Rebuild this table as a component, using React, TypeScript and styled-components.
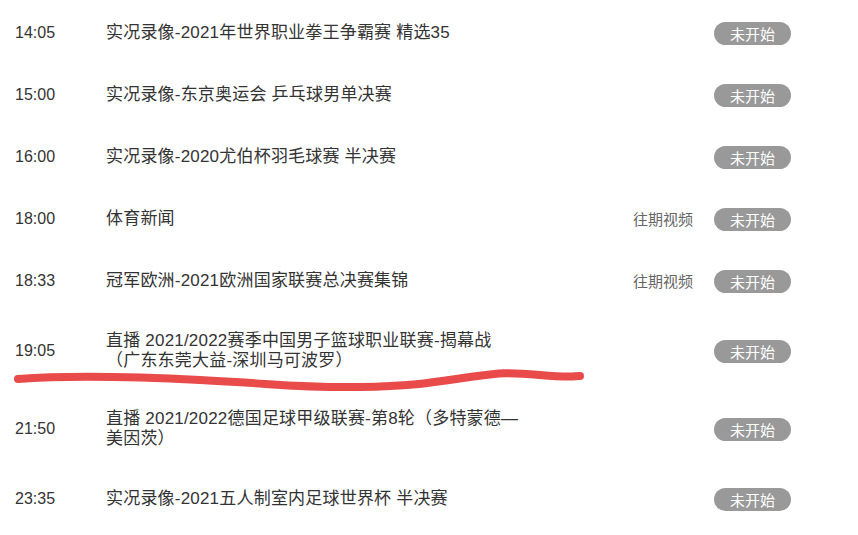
import React from "react";
import styled, { createGlobalStyle } from "styled-components";

const GlobalStyle = createGlobalStyle`
  html, body {
    margin: 0;
    padding: 0;
    background: #ffffff;
  }
  body {
    font-family: "Liberation Sans", "Noto Sans CJK SC", sans-serif;
  }
`;

const Page = styled.div`
  position: relative;
  width: 858px;
  height: 535px;
  overflow: hidden;
  background: #fff;
`;

const List = styled.ul`
  list-style: none;
  margin: 0;
  padding: 2px 0 0;
`;

const Row = styled.li`
  display: flex;
  align-items: center;
  box-sizing: border-box;
  min-height: 62px;
  padding: 19px 67px 19px 15px;
`;

const Time = styled.span`
  flex: none;
  width: 91px;
  font-family: "Liberation Sans", Arial, sans-serif;
  font-size: 16px;
  line-height: 20px;
  color: #333;
`;

const Title = styled.span`
  flex: none;
  width: 430px;
  font-family: "Liberation Sans", "Noto Sans CJK SC", sans-serif;
  font-size: 17px;
  line-height: 20px;
  letter-spacing: 0.2px;
  color: #333;
  white-space: pre-line;
`;

const Spacer = styled.span`
  flex: 1;
`;

const Replay = styled.span`
  flex: none;
  margin-right: 21px;
  font-family: "Noto Sans CJK SC", sans-serif;
  font-size: 15px;
  line-height: 20px;
  color: #666;
`;

const Badge = styled.span`
  flex: none;
  display: flex;
  align-items: center;
  justify-content: center;
  width: 77px;
  height: 23px;
  border-radius: 12px;
  background: #999999;
  color: #fff;
  font-family: "Noto Sans CJK SC", sans-serif;
  font-size: 15px;
  line-height: 1;
`;

const Scribble = styled.svg`
  position: absolute;
  left: 0;
  top: 0;
  pointer-events: none;
`;

type Item = { time: string; title: string; replay?: boolean };

const items: Item[] = [
  { time: "14:05", title: "实况录像-2021年世界职业拳王争霸赛 精选35" },
  { time: "15:00", title: "实况录像-东京奥运会 乒乓球男单决赛" },
  { time: "16:00", title: "实况录像-2020尤伯杯羽毛球赛 半决赛" },
  { time: "18:00", title: "体育新闻", replay: true },
  { time: "18:33", title: "冠军欧洲-2021欧洲国家联赛总决赛集锦", replay: true },
  {
    time: "19:05",
    title: "直播 2021/2022赛季中国男子篮球职业联赛-揭幕战\n（广东东莞大益-深圳马可波罗）",
  },
  {
    time: "21:50",
    title: "直播 2021/2022德国足球甲级联赛-第8轮（多特蒙德—\n美因茨）",
  },
  { time: "23:35", title: "实况录像-2021五人制室内足球世界杯 半决赛" },
];

export default function App() {
  return (
    <Page>
      <GlobalStyle />
      <List>
        {items.map((it) => (
          <Row key={it.time}>
            <Time>{it.time}</Time>
            <Title>{it.title}</Title>
            <Spacer />
            {it.replay && <Replay>往期视频</Replay>}
            <Badge>未开始</Badge>
          </Row>
        ))}
      </List>
      <Scribble width="858" height="535" viewBox="0 0 858 535">
        <path
          d="M18,379 C60,376 120,376 200,380 S300,388 360,387 S440,381 470,377 S505,372 540,375 S572,376 580,376"
          fill="none"
          stroke="#e94b4b"
          strokeWidth="8"
          strokeLinecap="round"
          strokeLinejoin="round"
        />
      </Scribble>
    </Page>
  );
}
